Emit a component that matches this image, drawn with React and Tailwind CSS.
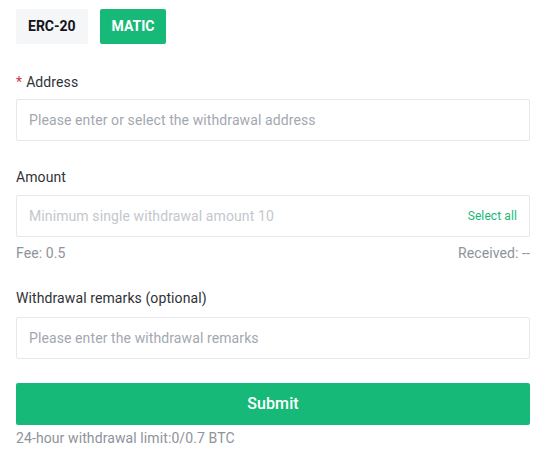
import { useState } from 'react'

export default function App() {
  const [network, setNetwork] = useState('MATIC')
  const [form, setForm] = useState({ address: '', amount: '', remarks: '' })

  function handleChange(e) {
    setForm(f => ({ ...f, [e.target.name]: e.target.value }))
  }

  return (
    <div className="bg-white pl-4 pr-2 pt-[9px] text-[14px] tracking-[0.1px] text-[#2f3238]" style={{ fontFamily: 'Roboto, "Noto Sans", sans-serif' }}>
      <div className="flex gap-3">
        {['ERC-20', 'MATIC'].map(n => (
          <button
            key={n}
            onClick={() => setNetwork(n)}
            className={
              'h-[35px] px-3 rounded-[2px] font-bold text-[14px] tracking-normal ' +
              (network === n ? 'bg-[#17b978] text-white' : 'bg-[#f5f6f8] text-[#121418]')
            }
          >
            {n}
          </button>
        ))}
      </div>

      <label className="block mt-[30px] mb-[8px] leading-[17px]">
        <span className="text-[#d4354a] mr-1">*</span>Address
      </label>
      <input
        name="address"
        value={form.address}
        onChange={handleChange}
        placeholder="Please enter or select the withdrawal address"
        className="block w-full h-[42px] border border-[#e6e8eb] rounded-[2px] px-3 text-[14px] tracking-[0.1px] placeholder:text-[#a3a8b0] focus:outline-none"
      />

      <label className="block mt-[28px] mb-[9px] leading-[17px]">Amount</label>
      <div className="flex items-center h-[42px] border border-[#e6e8eb] rounded-[2px] px-3">
        <input
          name="amount"
          value={form.amount}
          onChange={handleChange}
          placeholder="Minimum single withdrawal amount 10"
          className="flex-1 text-[14px] tracking-[0.1px] placeholder:text-[#c3c7cd] focus:outline-none"
        />
        <span className="text-[12px] text-[#17b978]">Select all</span>
      </div>
      <div className="flex justify-between mt-[8px] leading-[17px] text-[#8e939b]">
        <span>Fee: 0.5</span>
        <span>Received: --</span>
      </div>

      <label className="block mt-[28px] mb-[10px] leading-[17px]">Withdrawal remarks (optional)</label>
      <input
        name="remarks"
        value={form.remarks}
        onChange={handleChange}
        placeholder="Please enter the withdrawal remarks"
        className="block w-full h-[42px] border border-[#e6e8eb] rounded-[2px] px-3 text-[14px] tracking-[0.1px] placeholder:text-[#a3a8b0] focus:outline-none"
      />

      <button className="block w-full h-[42px] mt-[24px] bg-[#17b978] text-white text-[16px] font-medium rounded-[2px]">
        Submit
      </button>
      <p className="mt-[5px] leading-[17px] text-[#8e939b]">24-hour withdrawal limit:0/0.7 BTC</p>
    </div>
  )
}
